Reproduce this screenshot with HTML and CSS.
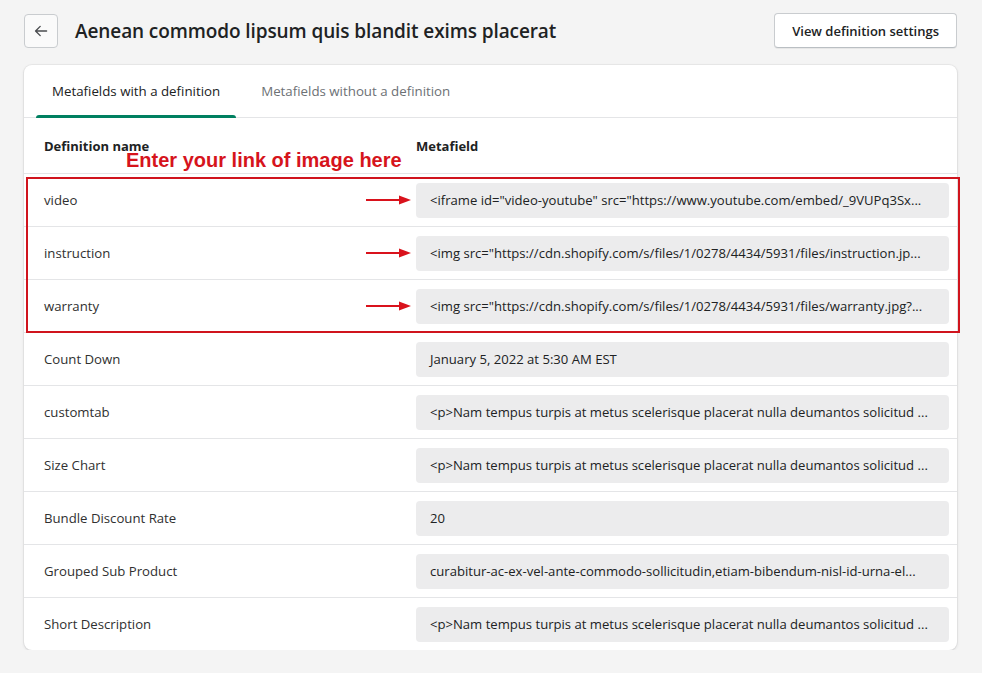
FILE: index.html
```html
<!DOCTYPE html>
<html lang="en">
<head>
<meta charset="utf-8">
<title>Metafields</title>
<link rel="stylesheet" href="styles.css">
</head>
<body>
<div class="page">
  <header class="topbar">
    <div class="title-group">
      <button class="back" aria-label="Back">
        <svg width="16" height="16" viewBox="0 0 20 20"><path d="M17 10H3.5M9 4.2L3.2 10 9 15.8" fill="none" stroke="#4a4c4f" stroke-width="1.7" stroke-linecap="round" stroke-linejoin="round"/></svg>
      </button>
      <h1 class="title">Aenean commodo lipsum quis blandit exims placerat</h1>
    </div>
    <button class="btn">View definition settings</button>
  </header>

  <section class="card">
    <nav class="tabs">
      <div class="tab active">Metafields with a definition</div>
      <div class="tab">Metafields without a definition</div>
    </nav>

    <div class="row head">
      <div class="name">Definition name</div>
      <div class="field-label">Metafield</div>
      <div class="note">Enter your link of image here</div>
    </div>

    <div class="highlight">
      <div class="row">
        <div class="name">video</div>
        <svg class="arrow" width="46" height="10" viewBox="0 0 46 10"><path d="M0 5H34" stroke="#d9121c" stroke-width="2"/><path d="M33 0.5L45 5 33 9.5Z" fill="#d9121c"/></svg>
        <div class="value">&lt;iframe id="video-youtube" src="https://www.youtube.com/embed/_9VUPq3Sx...</div>
      </div>
      <div class="row">
        <div class="name">instruction</div>
        <svg class="arrow" width="46" height="10" viewBox="0 0 46 10"><path d="M0 5H34" stroke="#d9121c" stroke-width="2"/><path d="M33 0.5L45 5 33 9.5Z" fill="#d9121c"/></svg>
        <div class="value">&lt;img src="https://cdn.shopify.com/s/files/1/0278/4434/5931/files/instruction.jp...</div>
      </div>
      <div class="row">
        <div class="name">warranty</div>
        <svg class="arrow" width="46" height="10" viewBox="0 0 46 10"><path d="M0 5H34" stroke="#d9121c" stroke-width="2"/><path d="M33 0.5L45 5 33 9.5Z" fill="#d9121c"/></svg>
        <div class="value">&lt;img src="https://cdn.shopify.com/s/files/1/0278/4434/5931/files/warranty.jpg?...</div>
      </div>
    </div>

    <div class="row">
      <div class="name">Count Down</div>
      <div class="value">January 5, 2022 at 5:30 AM EST</div>
    </div>
    <div class="row">
      <div class="name">customtab</div>
      <div class="value">&lt;p&gt;Nam tempus turpis at metus scelerisque placerat nulla deumantos solicitud ...</div>
    </div>
    <div class="row">
      <div class="name">Size Chart</div>
      <div class="value">&lt;p&gt;Nam tempus turpis at metus scelerisque placerat nulla deumantos solicitud ...</div>
    </div>
    <div class="row">
      <div class="name">Bundle Discount Rate</div>
      <div class="value">20</div>
    </div>
    <div class="row">
      <div class="name">Grouped Sub Product</div>
      <div class="value">curabitur-ac-ex-vel-ante-commodo-sollicitudin,etiam-bibendum-nisl-id-urna-el...</div>
    </div>
    <div class="row last">
      <div class="name">Short Description</div>
      <div class="value">&lt;p&gt;Nam tempus turpis at metus scelerisque placerat nulla deumantos solicitud ...</div>
    </div>
  </section>
</div>
</body>
</html>
```

FILE: styles.css
```css
* { box-sizing: border-box; }

body {
  margin: 0;
  background: #f4f4f4;
  font-family: "Open Sans", "Noto Sans", sans-serif;
  color: #202223;
}

.page {
  padding: 13px 25px 0 24px;
}

.topbar {
  display: flex;
  align-items: center;
  justify-content: space-between;
  height: 35px;
}

.title-group {
  display: flex;
  align-items: center;
}

.back {
  width: 34px;
  height: 34px;
  display: flex;
  align-items: center;
  justify-content: center;
  background: #fafafa;
  border: 1px solid #c9cccf;
  border-radius: 4px;
  padding: 0;
}

.title {
  margin: 0 0 0 17px;
  font-size: 19px;
  font-weight: 600;
  letter-spacing: -0.1px;
  color: #202223;
}

.btn {
  height: 35px;
  padding: 0 17px;
  background: #fff;
  border: 1px solid #c9cccf;
  border-bottom-color: #babfc3;
  border-radius: 4px;
  font-family: inherit;
  font-size: 13px;
  font-weight: 600;
  color: #202223;
  box-shadow: 0 1px 0 rgba(0,0,0,0.05);
}

.card {
  margin-top: 17px;
  background: #fff;
  border-radius: 8px;
  box-shadow: 0 0 0 1px rgba(63,63,68,0.05), 0 1px 3px rgba(63,63,68,0.15);
}

.tabs {
  display: flex;
  height: 53px;
  padding-left: 12px;
  border-bottom: 1px solid #e4e5e7;
}

.tab {
  position: relative;
  display: flex;
  align-items: center;
  padding: 0 16px;
  margin-right: 9px;
  font-size: 13.3px;
  color: #6d7175;
}

.tab.active {
  color: #202223;
}

.tab.active::after {
  content: "";
  position: absolute;
  left: 0;
  right: 0;
  bottom: -1px;
  height: 3px;
  background: #008060;
  border-radius: 3px 3px 0 0;
}

.row {
  position: relative;
  display: flex;
  align-items: center;
  height: 53px;
  padding: 0 8px 0 20px;
  border-bottom: 1px solid #e4e5e7;
}

.row.last {
  border-bottom: 0;
  height: 52px;
  border-radius: 0 0 8px 8px;
}

.row.head {
  height: 56px;
  font-weight: 700;
  font-size: 13px;
}

.name {
  flex: 1;
  font-size: 13.2px;
  color: #303030;
}

.head .name { color: #202223; font-size: 13px; }

.field-label {
  width: 533px;
}

.note {
  position: absolute;
  left: 102px;
  top: 31px;
  font-family: "Liberation Sans", Arial, sans-serif;
  font-weight: 700;
  font-size: 20px;
  color: #d6141c;
}

.highlight {
  position: relative;
}

.highlight::after {
  content: "";
  position: absolute;
  top: 3px;
  left: 2px;
  right: -3px;
  bottom: 0;
  border: 2px solid #d0141d;
  pointer-events: none;
}

.arrow {
  margin-right: 4px;
  flex: none;
}

.value {
  width: 533px;
  height: 35px;
  display: flex;
  align-items: center;
  padding: 0 6px 0 14px;
  background: #ececed;
  border-radius: 4px;
  font-size: 13.1px;
  color: #202223;
  white-space: nowrap;
  overflow: hidden;
}
```
